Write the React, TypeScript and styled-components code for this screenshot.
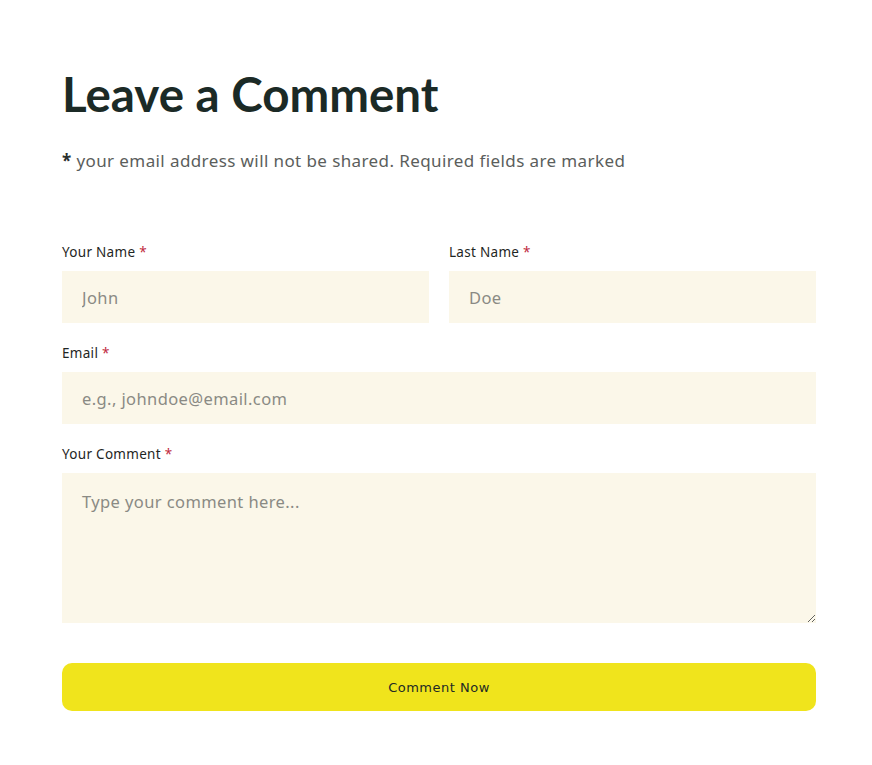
import React from "react";
import styled, { createGlobalStyle } from "styled-components";

const GlobalStyle = createGlobalStyle`
  body {
    margin: 0;
    background: #ffffff;
    font-family: "Noto Sans", "Open Sans", sans-serif;
  }
  * {
    box-sizing: border-box;
  }
`;

const Page = styled.div`
  width: 872px;
  padding: 66px 56px 54px 62px;
`;

const Heading = styled.h1`
  margin: 0;
  font-family: "Lato", "Inter", sans-serif;
  font-weight: 700;
  font-size: 47.5px;
  line-height: 56px;
  letter-spacing: 0;
  color: #1b2a26;
`;

const Note = styled.p`
  margin: 27px 0 0;
  font-size: 17px;
  line-height: 24px;
  color: #5b5e5c;
  letter-spacing: 0.4px;
`;

const Star = styled.span`
  color: #2a2f2d;
  font-weight: 700;
`;

const Form = styled.form`
  margin-top: 70px;
  display: flex;
  flex-direction: column;
  gap: 21px;
`;

const Row = styled.div`
  display: grid;
  grid-template-columns: 1fr 1fr;
  gap: 20px;
`;

const Field = styled.div`
  display: flex;
  flex-direction: column;
`;

const Label = styled.label`
  font-size: 13.5px;
  line-height: 18px;
  letter-spacing: 0.3px;
  color: #1f2624;
  margin-bottom: 10px;
`;

const Required = styled.span`
  color: #c0283d;
`;

const Input = styled.input`
  height: 52px;
  border: none;
  outline: none;
  background: #fbf7e9;
  padding: 0 20px;
  font-family: "Noto Sans", "Open Sans", sans-serif;
  font-size: 16.5px;
  letter-spacing: 0.4px;
  color: #333;

  &::placeholder {
    color: #8a8a84;
  }
`;

const TextArea = styled.textarea`
  height: 150px;
  border: none;
  outline: none;
  background: #fbf7e9;
  padding: 17px 20px;
  font-family: "Noto Sans", "Open Sans", sans-serif;
  font-size: 16.5px;
  line-height: 24px;
  letter-spacing: 0.4px;
  color: #333;
  resize: vertical;

  &::placeholder {
    color: #8a8a84;
  }
`;

const Submit = styled.button`
  margin-top: 19px;
  height: 48px;
  border: none;
  border-radius: 10px;
  background: #f0e41c;
  color: #222a24;
  font-family: "DejaVu Sans", "Liberation Sans", sans-serif;
  font-size: 13px;
  letter-spacing: 0.5px;
  cursor: pointer;
`;

export default function App() {
  return (
    <>
      <GlobalStyle />
      <Page>
        <Heading>Leave a Comment</Heading>
        <Note>
          <Star>*</Star> your email address will not be shared. Required fields are marked
        </Note>
        <Form onSubmit={(e) => e.preventDefault()}>
          <Row>
            <Field>
              <Label>
                Your Name <Required>*</Required>
              </Label>
              <Input placeholder="John" />
            </Field>
            <Field>
              <Label>
                Last Name <Required>*</Required>
              </Label>
              <Input placeholder="Doe" />
            </Field>
          </Row>
          <Field>
            <Label>
              Email <Required>*</Required>
            </Label>
            <Input placeholder="e.g., johndoe@email.com" />
          </Field>
          <Field>
            <Label>
              Your Comment <Required>*</Required>
            </Label>
            <TextArea placeholder="Type your comment here..." />
          </Field>
          <Submit type="submit">Comment Now</Submit>
        </Form>
      </Page>
    </>
  );
}
